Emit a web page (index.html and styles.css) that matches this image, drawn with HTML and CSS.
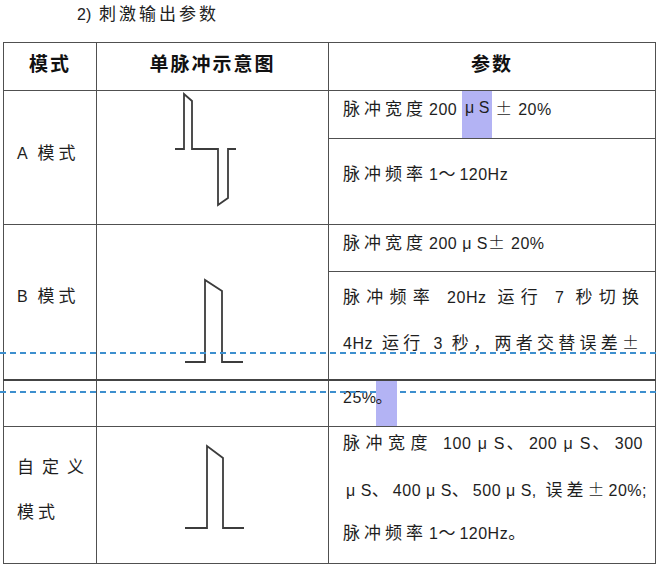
FILE: index.html
```html
<!DOCTYPE html>
<html lang="zh-CN">
<head>
<meta charset="utf-8">
<title>刺激输出参数</title>
<link rel="stylesheet" href="styles.css">
</head>
<body>
<h1 class="title"><span class="n">2)</span> 刺激输出参数</h1>
<div class="sheet">
  <table class="grid">
    <colgroup>
      <col class="c1"><col class="c2"><col class="c3">
    </colgroup>
    <tr class="head">
      <th>模式</th>
      <th>单脉冲示意图</th>
      <th>参数</th>
    </tr>
    <tr class="h47">
      <td rowspan="2" class="mode mode-a"><div class="ln"><span class="n">A</span> 模式</div></td>
      <td rowspan="2" class="wave">
        <svg class="pulse" width="232" height="125" viewBox="0 0 232 125"><path d="M78,58 H87 V3 L95,10 V58 H121 V114 L131,107 V58 H139"/></svg>
      </td>
      <td class="p"><div class="ln">脉冲宽度<span class="n gap">200 </span><span class="hl hl-47"><span class="n">μ S</span></span><span class="cj">±</span><span class="n gap">20%</span></div></td>
    </tr>
    <tr class="h86">
      <td class="p pad19"><div class="ln">脉冲频率<span class="n gap">1</span>～<span class="n">120Hz</span></div></td>
    </tr>
    <tr class="h47">
      <td rowspan="2" class="mode mode-b"><div class="ln"><span class="n">B</span> 模式</div></td>
      <td rowspan="2" class="wave">
        <svg class="pulse" width="232" height="145" viewBox="0 0 232 145"><path d="M88,137 H108 V55 L125,66 V137 H146"/></svg>
      </td>
      <td class="p"><div class="ln">脉冲宽度<span class="n gap">200 μ S</span><span class="cj">±</span><span class="n gap">20%</span></div></td>
    </tr>
    <tr class="h108">
      <td class="p pad9">
        <div class="ln ln44 just">脉冲频率 <span class="n">20Hz</span> 运行 <span class="n">7</span> 秒切换</div>
        <div class="ln ln44 just"><span class="n">4Hz</span> 运行 <span class="n">3</span> 秒，两者交替误差<span class="cj">±</span></div>
      </td>
    </tr>
    <tr class="h45 cont">
      <td></td>
      <td></td>
      <td class="p"><div class="ln"><span class="n">25%</span><span class="hl hl-45">。</span></div></td>
    </tr>
    <tr class="h137">
      <td class="mode mode-c">
        <div class="ln ln45 wide">自定义</div>
        <div class="ln ln45">模式</div>
      </td>
      <td class="wave">
        <svg class="pulse" width="232" height="120" viewBox="0 0 232 120"><path d="M88,101 H110 V19 L126,31 V101 H147"/></svg>
      </td>
      <td class="p">
        <div class="ln ln45 just">脉冲宽度 <span class="n">100 μ S</span>、<span class="n">200 μ S</span>、<span class="n">300</span></div>
        <div class="ln ln45 just tight"><span class="n">μ S</span>、<span class="n">400 μ S</span>、<span class="n">500 μ S,</span> 误差<span class="cj">±</span><span class="n">20%;</span></div>
        <div class="ln ln45">脉冲频率<span class="n gap">1</span>～<span class="n">120Hz</span>。</div>
      </td>
    </tr>
  </table>
  <div class="pagebreak pb1"></div>
  <div class="pagebreak pb2"></div>
</div>
</body>
</html>
```
FILE: styles.css
```css
html, body {
  margin: 0;
  padding: 0;
  background: #ffffff;
}

body {
  width: 660px;
  height: 567px;
  overflow: hidden;
  color: #1e1e1e;
  font-family: "Liberation Sans", "Noto Sans CJK SC", sans-serif;
}

.title {
  margin: 0;
  padding: 2px 0 0 77px;
  height: 42px;
  box-sizing: border-box;
  font-size: 17px;
  font-weight: 400;
  line-height: 26px;
  letter-spacing: 3px;
  color: #222;
}

.title .n {
  letter-spacing: 0;
}

.sheet {
  position: relative;
  margin-left: 3px;
}

.grid {
  border-collapse: collapse;
  table-layout: fixed;
  width: 652px;
}

.grid .c1 { width: 93px; }
.grid .c2 { width: 232px; }
.grid .c3 { width: 327px; }

.grid th,
.grid td {
  border: 1.5px solid #505050;
  padding: 0;
  vertical-align: top;
}

.grid th {
  font-family: "Noto Sans CJK SC", sans-serif;
  font-weight: 700;
  font-size: 19px;
  letter-spacing: 2px;
  line-height: 40px;
  text-align: center;
  color: #111;
}

.grid .head { height: 48px; }
.grid .h47 { height: 47px; }
.grid .h86 { height: 86px; }
.grid .h108 { height: 108px; }
.grid .h45 { height: 45px; }
.grid .h137 { height: 137px; }

.grid .cont > td { border-top: 2.5px solid #444; }

.grid td.p {
  padding: 0 12px 0 14px;
  font-size: 17px;
  letter-spacing: 4px;
}

.grid td.pad19 { padding-top: 19px; }
.grid td.pad9 { padding-top: 9px; }

.n {
  font-family: "Liberation Sans", sans-serif;
  font-size: 16px;
  letter-spacing: 0.5px;
}

.gap {
  margin-left: 2px;
}

.cj {
  font-family: "Noto Sans CJK SC", sans-serif;
  font-weight: 300;
}

.ln {
  line-height: 33px;
  white-space: nowrap;
}

.ln44 { height: 44px; }
.ln45 { height: 45px; }

.just {
  text-align: justify;
  text-align-last: justify;
}

.tight { padding-left: 3px; }

.hl {
  position: relative;
  z-index: 2;
  display: inline-block;
  vertical-align: top;
  background: #b3b3f4;
}

.hl-47 {
  height: 47px;
  width: 30px;
  margin-right: 3px;
  text-align: center;
}

.hl-47 .n {
  letter-spacing: 0;
}

.hl-45 {
  height: 45px;
  width: 21px;
  letter-spacing: 0;
  margin-left: -1px;
}

.grid td.mode {
  padding-left: 13px;
  font-size: 17px;
  letter-spacing: 4px;
}

.grid td.mode-a { padding-top: 46px; }
.grid td.mode-b { padding-top: 55px; }
.grid td.mode-c { padding-top: 24px; }

.mode .n {
  letter-spacing: 0;
  margin-right: 1px;
}

.wide { letter-spacing: 8px; }

.pulse {
  display: block;
}

.pulse path {
  fill: none;
  stroke: #3c3c3c;
  stroke-width: 1.8;
  stroke-linejoin: miter;
}

.pagebreak {
  position: absolute;
  left: -3px;
  width: 660px;
  height: 1.5px;
  z-index: 1;
  background: repeating-linear-gradient(90deg, #3d8fce 0 6px, transparent 6px 10px);
}

.pb1 { top: 310px; }
.pb2 { top: 349px; }
```
